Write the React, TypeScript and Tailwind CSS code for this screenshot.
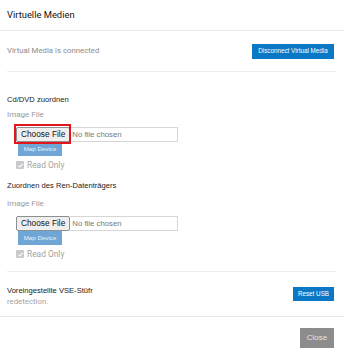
import React from 'react';

// Virtual media dialog: one mapping section per device type
function ReadOnlyBox() {
  return (
    <div className="ml-[9px] flex items-center gap-[3px] h-[10px]">
      <div className="w-[8px] h-[8px] rounded-[1px] bg-[#c9c9c9] flex items-center justify-center">
        <svg viewBox="0 0 8 8" className="w-[7px] h-[7px]">
          <path d="M1.5 4.2 L3.2 5.8 L6.5 2.2" stroke="#fff" strokeWidth="1.2" fill="none" />
        </svg>
      </div>
      <span className="text-[8.4px] leading-[10px] text-[#a3a3a3]">Read Only</span>
    </div>
  );
}

function FileRow({ highlighted }: { highlighted?: boolean }) {
  return (
    <div className="ml-[9px] flex items-center h-[15px] relative">
      <div className="h-[15px] px-[4px] flex items-center bg-[#efefef] border border-[#8f8f8f] rounded-[2px] font-['Liberation_Sans',sans-serif] text-[8.3px] text-[#111]">
        Choose File
      </div>
      <div className="h-[15px] w-[108px] flex items-center border border-[#d6d6d6] border-l-0 pl-[2px] font-['Liberation_Sans',sans-serif] text-[7.8px] text-[#777]">
        No file chosen
      </div>
      {highlighted && (
        <div className="absolute left-[-2px] top-[-3px] w-[57px] h-[20px] border-2 border-[#e2141c]" />
      )}
    </div>
  );
}

function MapSection({ title, highlighted, gap }: { title: string; highlighted?: boolean; gap: string }) {
  return (
    <div className="flex flex-col">
      <div className="text-[7.6px] leading-[10px] text-[#222] font-['Liberation_Sans',sans-serif]">{title}</div>
      <div className={`${gap} text-[8px] leading-[10px] text-[#9a9a9a]`}>Image File</div>
      <div className="mt-[7px]">
        <FileRow highlighted={highlighted} />
      </div>
      <div className="ml-[11px] w-[44px] h-[14px] bg-[#6fa6d6] flex items-center justify-center text-[6.2px] text-[#eaf3fb] font-['Liberation_Sans',sans-serif]">
        Map Device
      </div>
      <div className="mt-[4px]">
        <ReadOnlyBox />
      </div>
    </div>
  );
}

export default function App() {
  return (
    <div className="w-[344px] h-[355px] bg-white flex flex-col font-['Roboto',sans-serif]">
      <div className="h-[31px] shrink-0 px-[7px] flex items-center border-b border-[#e8e8e8]">
        <span className="text-[9.4px] text-[#111]">Virtuelle Medien</span>
      </div>

      <div className="flex-1 flex flex-col pl-[7px] pr-[8px]">
        <div className="h-[41px] flex items-center justify-between border-b border-[#ededed]">
          <span className="text-[7.8px] text-[#8c8c8c]">Virtual Media is connected</span>
          <button className="mr-[2px] w-[82px] h-[15px] bg-[#0a78c4] text-white text-[6.3px] font-['Liberation_Sans',sans-serif]">
            Disconnect Virtual Media
          </button>
        </div>

        <div className="pt-[23px] pb-[12px] flex flex-col gap-[11px] border-b border-[#ededed]">
          <MapSection title="Cd/DVD zuordnen" highlighted gap="mt-[5px]" />
          <MapSection title="Zuordnen des Ren-Datenträgers" gap="mt-[8px]" />
        </div>

        <div className="flex-1 flex items-start justify-between pt-[13px]">
          <div className="flex flex-col">
            <span className="text-[7.6px] leading-[11px] text-[#222] font-['Liberation_Sans',sans-serif]">
              Voreingestellte VSE-Stüfr
            </span>
            <span className="text-[7.8px] leading-[11px] text-[#a3a3a3]">redetection.</span>
          </div>
          <button className="mt-[2px] mr-[2px] w-[41px] h-[14px] bg-[#0a78c4] text-white text-[6.3px] font-['Liberation_Sans',sans-serif]">
            Reset USB
          </button>
        </div>
      </div>

      <div className="h-[39px] shrink-0 border-t border-[#e8e8e8] flex justify-end items-start pt-[11px] pr-[10px]">
        <button className="w-[34px] h-[20px] bg-[#8c8c8c] text-[#e4e4e4] text-[8px] font-['Liberation_Sans',sans-serif]">
          Close
        </button>
      </div>
    </div>
  );
}
